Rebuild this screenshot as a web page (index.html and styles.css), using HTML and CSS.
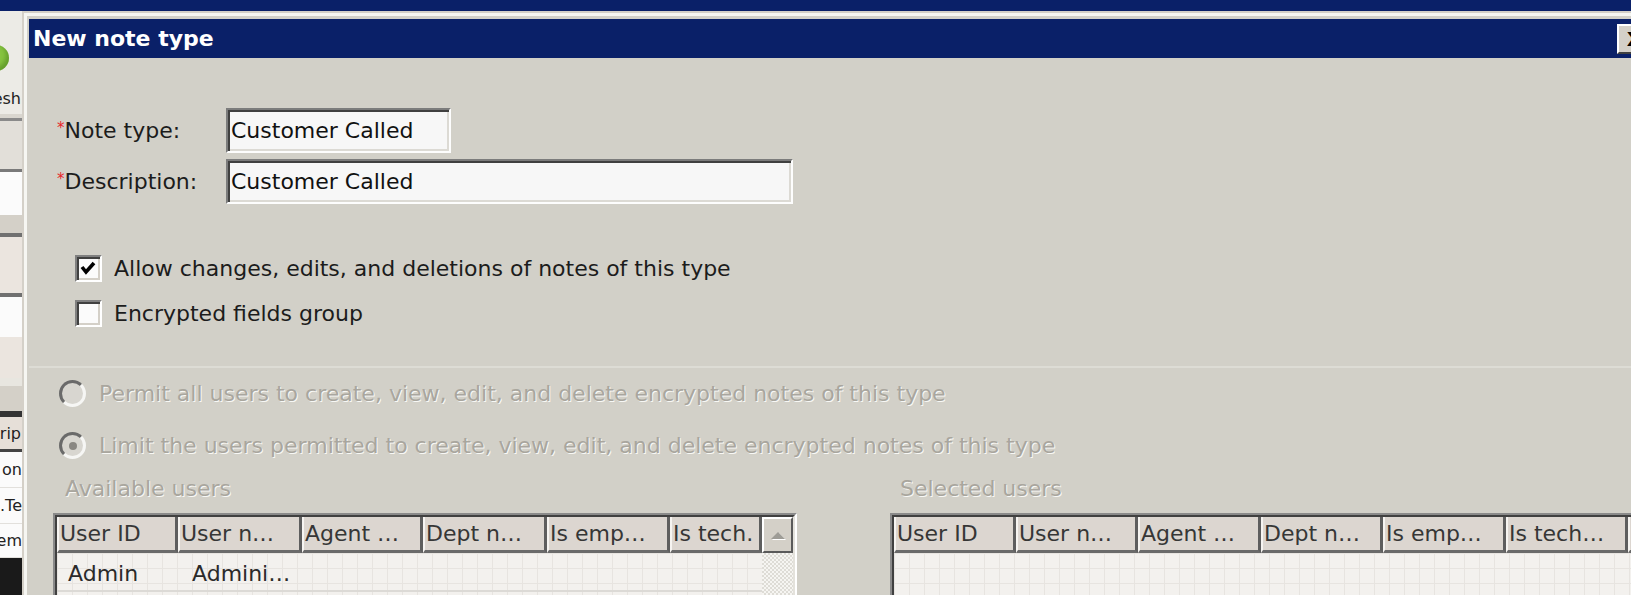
FILE: index.html
```html
<!DOCTYPE html>
<html lang="en">
<head>
    <meta charset="UTF-8">
    <meta name="viewport" content="width=device-width, initial-scale=1.0">
    <title>New note type</title>
    <link rel="stylesheet" href="styles.css">
</head>
<body>

<div class="screen">
    <div class="app-bar"></div>

    <div class="main">
        <!-- the main window peeking out behind the dialog -->
        <div class="app-side">
            <div class="side-block side-top"></div>
            <div class="side-block side-icon"><span class="green-dot"></span></div>
            <div class="side-block side-text">Refresh</div>
            <div class="side-block side-band"></div>
            <div class="side-block side-gray"></div>
            <div class="side-block side-field"></div>
            <div class="side-block side-gray2"></div>
            <div class="side-block side-pink"></div>
            <div class="side-block side-field2"></div>
            <div class="side-block side-pink2"></div>
            <div class="side-block side-gray3"></div>
            <div class="side-block side-head">Descrip</div>
            <div class="side-block side-cell">on</div>
            <div class="side-block side-cell">.Te</div>
            <div class="side-block side-cell">em</div>
            <div class="side-block side-black"></div>
        </div>

        <div class="dialog">
            <div class="dlg-frame">
                <div class="dlg-title">
                    <span>New note type</span>
                    <span class="close-btn">X</span>
                </div>

                <div class="dlg-body">
                    <div class="fields">
                        <div class="field-row">
                            <label class="field-label"><span class="req">*</span>Note type:</label>
                            <div class="textbox short">Customer Called</div>
                        </div>
                        <div class="field-row">
                            <label class="field-label"><span class="req">*</span>Description:</label>
                            <div class="textbox long">Customer Called</div>
                        </div>
                    </div>

                    <div class="checks">
                        <div class="check-row">
                            <span class="checkbox">
                                <svg width="23" height="23" viewBox="0 0 23 23"><polyline points="5,10 9,15 17,6" fill="none" stroke="#000" stroke-width="3.6"/></svg>
                            </span>
                            Allow changes, edits, and deletions of notes of this type
                        </div>
                        <div class="check-row">
                            <span class="checkbox"></span>
                            Encrypted fields group
                        </div>
                    </div>

                    <div class="separator"></div>

                    <div class="radios">
                        <div class="radio-row">
                            <span class="radio"></span>
                            Permit all users to create, view, edit, and delete encrypted notes of this type
                        </div>
                        <div class="radio-row">
                            <span class="radio on"></span>
                            Limit the users permitted to create, view, edit, and delete encrypted notes of this type
                        </div>
                    </div>

                    <div class="user-lists">
                        <div class="user-list available">
                            <div class="list-caption">Available users</div>
                            <div class="grid">
                                <div class="grid-inner">
                                    <div class="grid-head">
                                        <span class="hcell w121">User ID</span>
                                        <span class="hcell w124">User n…</span>
                                        <span class="hcell w121">Agent …</span>
                                        <span class="hcell w124">Dept n…</span>
                                        <span class="hcell w123">Is emp…</span>
                                        <span class="hcell w92">Is tech.</span>
                                        <span class="scroll-btn"><span class="arrow-up"></span></span>
                                    </div>
                                    <div class="grid-main">
                                        <div class="grid-rows">
                                            <div class="grid-row">
                                                <span class="cell w121">Admin</span>
                                                <span class="cell w124">Admini…</span>
                                            </div>
                                        </div>
                                        <div class="scroll-track"></div>
                                    </div>
                                </div>
                            </div>
                        </div>

                        <div class="user-list selected">
                            <div class="list-caption">Selected users</div>
                            <div class="grid">
                                <div class="grid-inner">
                                    <div class="grid-head">
                                        <span class="hcell w122">User ID</span>
                                        <span class="hcell w122">User n…</span>
                                        <span class="hcell w123">Agent …</span>
                                        <span class="hcell w122">Dept n…</span>
                                        <span class="hcell w123">Is emp…</span>
                                        <span class="hcell w122">Is tech…</span>
                                        <span class="hcell w122"></span>
                                    </div>
                                    <div class="grid-main">
                                        <div class="grid-rows"></div>
                                    </div>
                                </div>
                            </div>
                        </div>
                    </div>
                </div>
            </div>
        </div>
    </div>
</div>

</body>
</html>
```

FILE: styles.css
```css
* {
    box-sizing: border-box;
}

body {
    margin: 0;
    font-family: "DejaVu Sans", sans-serif;
    font-size: 22px;
    color: #1c1c1c;
    background-color: #d4d0c8;
}

.screen {
    width: 1631px;
    height: 595px;
    overflow: hidden;
    display: flex;
    flex-direction: column;
}

.app-bar {
    height: 11px;
    flex: none;
    background-color: #0a2068;
}

.main {
    flex: 1;
    display: flex;
    min-height: 0;
}

/* main window strip on the left */
.app-side {
    width: 22px;
    flex: none;
    display: flex;
    flex-direction: column;
    overflow: hidden;
    font-size: 16px;
    color: #222;
    background-color: #d4d0c8;
}

.side-block {
    flex: none;
    display: flex;
    align-items: center;
    justify-content: flex-end;
    white-space: nowrap;
}

.side-top { height: 34px; background-color: #ecebe6; }
.side-icon { height: 38px; background-color: #ecebe6; justify-content: flex-start; }
.side-text { height: 31px; background-color: #ecebe6; padding-right: 1px; }
.side-band { height: 7px; background-color: #d9d6cf; border-bottom: 3px solid #8a8a8a; }
.side-gray { height: 48px; background-color: #e2dfd9; }
.side-field { height: 46px; background-color: #fbfbfb; border-top: 3px solid #7a7a7a; }
.side-gray2 { height: 22px; background-color: #d4d0c8; border-bottom: 4px solid #707070; }
.side-pink { height: 60px; background-color: #ebe5df; border-bottom: 4px solid #707070; }
.side-field2 { height: 40px; background-color: #fbfbfb; }
.side-pink2 { height: 41px; background-color: #ebe5df; }
.side-gray3 { height: 39px; background-color: #d4d0c8; border-top: 8px solid #e8e6e0; border-bottom: 6px solid #333; }
.side-head { height: 35px; background-color: #e6dfd8; border-bottom: 3px solid #444; padding-right: 1px; }
.side-cell { height: 36px; background-color: #fbfbfb; border-bottom: 1px solid #e2e0dc; }
.side-cell:nth-child(15) { height: 34px; }
.side-black { flex: 1; background-color: #1a1a1a; }

.green-dot {
    width: 26px;
    height: 26px;
    margin-left: -17px;
    margin-top: -12px;
    border-radius: 50%;
    background-color: #86c440;
    box-shadow: inset -3px -3px 4px rgba(40, 90, 10, 0.35);
}

/* dialog window */
.dialog {
    width: 1633px;
    flex: none;
    border-top: 2px solid #d4d0c8;
    border-left: 2px solid #d4d0c8;
}

.dlg-frame {
    height: 100%;
    border-top: 3px solid #f6f6f2;
    border-left: 3px solid #f6f6f2;
    padding: 3px 0 0 2px;
    background-color: #d2d0c8;
}

.dlg-title {
    height: 39px;
    display: flex;
    align-items: center;
    padding-left: 4px;
    background-color: #0a2068;
    color: #ffffff;
    font-weight: bold;
}

.close-btn {
    margin-left: auto;
    margin-right: 3px;
    width: 35px;
    height: 30px;
    display: flex;
    align-items: center;
    justify-content: center;
    background-color: #d4d0c8;
    border-top: 2px solid #ffffff;
    border-left: 2px solid #ffffff;
    border-right: 2px solid #404040;
    border-bottom: 2px solid #404040;
    color: #000;
    font-size: 20px;
}

.dlg-body {
    padding-top: 50px;
}

/* text fields */
.fields {
    margin-left: 28px;
    display: flex;
    flex-direction: column;
    gap: 6px;
}

.field-row {
    display: flex;
    align-items: center;
    height: 45px;
}

.field-label {
    width: 169px;
    flex: none;
}

.req {
    color: #e8262a;
    font-size: 15px;
    vertical-align: 5px;
}

.textbox {
    height: 45px;
    display: flex;
    align-items: center;
    padding-left: 3px;
    background-color: #f7f7f7;
    border-top: 2px solid #7c7c7c;
    border-left: 2px solid #7c7c7c;
    border-right: 2px solid #fdfdfd;
    border-bottom: 2px solid #fdfdfd;
    box-shadow: inset 2px 2px 0 #404040, inset -2px -2px 0 #dcdad4;
    color: #111;
}

.textbox.short { width: 225px; }
.textbox.long { width: 567px; }

/* checkboxes */
.checks {
    margin: 51px 0 0 46px;
    display: flex;
    flex-direction: column;
    gap: 18px;
}

.check-row {
    height: 27px;
    display: flex;
    align-items: center;
    gap: 12px;
}

.checkbox {
    width: 27px;
    height: 27px;
    flex: none;
    background-color: #fbfbfb;
    border-top: 2px solid #808080;
    border-left: 2px solid #808080;
    border-right: 2px solid #ffffff;
    border-bottom: 2px solid #ffffff;
    box-shadow: inset 2px 2px 0 #404040, inset -2px -2px 0 #d4d0c8;
}

.checkbox svg {
    display: block;
}

.separator {
    margin-top: 39px;
    height: 2px;
    background-color: #dddcd5;
}

/* radio buttons, disabled */
.radios {
    margin: 12px 0 0 30px;
    display: flex;
    flex-direction: column;
    gap: 25px;
}

.radio-row {
    height: 27px;
    display: flex;
    align-items: center;
    gap: 13px;
    color: #a9a69e;
    text-shadow: 1px 1px 0 #f8f8f5;
}

.radio {
    width: 27px;
    height: 27px;
    flex: none;
    border-radius: 50%;
    border: 3px solid;
    border-color: #6a6a6a #f6f6f4 #f6f6f4 #6a6a6a;
    background-color: #d8d6d0;
    display: flex;
    align-items: center;
    justify-content: center;
}

.radio.on::after {
    content: "";
    width: 8px;
    height: 8px;
    border-radius: 50%;
    background-color: #8a8883;
}

/* user lists */
.user-lists {
    margin: 17px 0 0 24px;
    display: flex;
    gap: 93px;
}

.user-list.available { width: 744px; flex: none; }
.user-list.selected { width: 820px; flex: none; }

.list-caption {
    height: 26px;
    line-height: 26px;
    margin-bottom: 11px;
    padding-left: 12px;
    color: #a9a69e;
    text-shadow: 1px 1px 0 #f8f8f5;
}

.user-list.selected .list-caption {
    padding-left: 10px;
}

.grid {
    height: 120px;
    border-top: 2px solid #8a8a8a;
    border-left: 2px solid #8a8a8a;
    border-right: 2px solid #ffffff;
}

.grid-inner {
    height: 100%;
    border-top: 2px solid #404040;
    border-left: 2px solid #404040;
    border-right: 2px solid #e4e2dc;
    display: flex;
    flex-direction: column;
}

.grid-head {
    height: 36px;
    flex: none;
    display: flex;
}

.hcell {
    flex: none;
    display: flex;
    align-items: center;
    padding-left: 1px;
    overflow: hidden;
    white-space: nowrap;
    background-color: #dcd6d0;
    border-left: 2px solid #f6f4f1;
    border-right: 3px solid #5e5e5e;
    border-bottom: 3px solid #6a6a6a;
    color: #363636;
}

.w92 { width: 92px; }
.w121 { width: 121px; }
.w122 { width: 122px; }
.w123 { width: 123px; }
.w124 { width: 124px; }

.scroll-btn {
    width: 31px;
    flex: none;
    display: flex;
    align-items: center;
    justify-content: center;
    background-color: #d4d0c8;
    border-top: 2px solid #ffffff;
    border-left: 2px solid #ffffff;
    border-right: 2px solid #5a5a5a;
    border-bottom: 2px solid #5a5a5a;
}

.arrow-up {
    width: 0;
    height: 0;
    border-left: 7px solid transparent;
    border-right: 7px solid transparent;
    border-bottom: 7px solid #9e9c96;
    filter: drop-shadow(1px 1px 0 #ffffff);
}

.grid-main {
    flex: 1;
    display: flex;
}

.grid-rows {
    flex: 1;
    background-color: #f3f1ee;
    background-image:
        linear-gradient(90deg, #e7e4e0 1px, transparent 1px),
        linear-gradient(#e7e4e0 1px, transparent 1px);
    background-size: 15px 15px;
}

.grid-row {
    height: 39px;
    padding-top: 3px;
    display: flex;
    border-bottom: 2px solid #dcdad6;
}

.cell {
    flex: none;
    display: flex;
    align-items: center;
    padding-left: 11px;
    color: #2a2a2a;
}

.cell + .cell {
    padding-left: 14px;
}

.scroll-track {
    width: 31px;
    flex: none;
    background-color: #f4f3f0;
    background-image: repeating-conic-gradient(#dedcd6 0 25%, #f6f5f2 0 50%);
    background-size: 4px 4px;
}
```
